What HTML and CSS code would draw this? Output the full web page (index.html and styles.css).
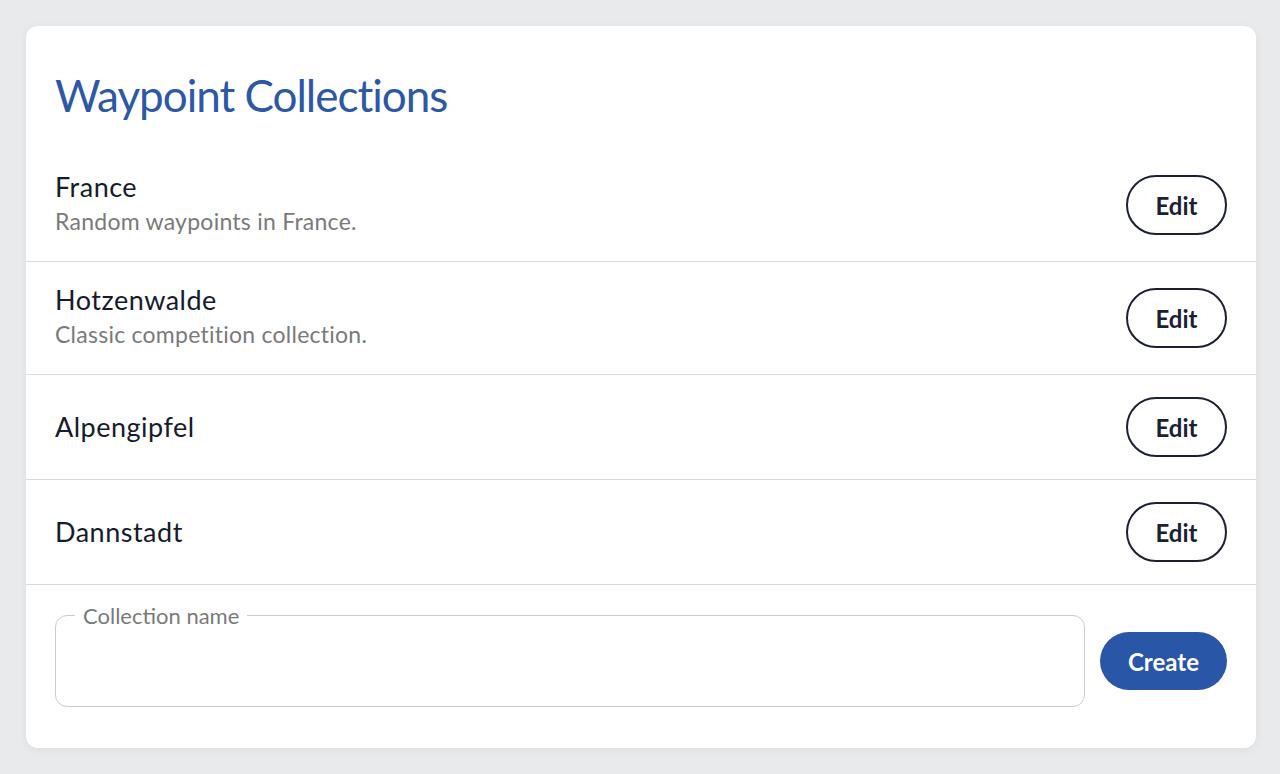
FILE: index.html
```html
<!DOCTYPE html>
<html lang="en">
<head>
<meta charset="utf-8">
<title>Waypoint Collections</title>
<link rel="stylesheet" href="styles.css">
</head>
<body>
<main class="card">
  <h1 class="title">Waypoint Collections</h1>
  <ul class="list">
    <li class="row">
      <div class="info">
        <div class="name">France</div>
        <div class="desc">Random waypoints in France.</div>
      </div>
      <button class="btn-edit">Edit</button>
    </li>
    <li class="row">
      <div class="info">
        <div class="name">Hotzenwalde</div>
        <div class="desc">Classic competition collection.</div>
      </div>
      <button class="btn-edit">Edit</button>
    </li>
    <li class="row">
      <div class="info">
        <div class="name">Alpengipfel</div>
      </div>
      <button class="btn-edit">Edit</button>
    </li>
    <li class="row">
      <div class="info">
        <div class="name">Dannstadt</div>
      </div>
      <button class="btn-edit">Edit</button>
    </li>
  </ul>
  <form class="create-form">
    <div class="field">
      <label class="field-label" for="cname">Collection name</label>
      <input class="field-input" id="cname" type="text">
    </div>
    <button type="button" class="btn-create">Create</button>
  </form>
</main>
</body>
</html>
```

FILE: styles.css
```css
* { box-sizing: border-box; }

html, body {
  margin: 0;
  padding: 0;
}

body {
  background: #e9eaec;
  font-family: Lato, "Open Sans", sans-serif;
  padding: 26px 24px 26px 26px;
  height: 774px;
  overflow: hidden;
}

.card {
  width: 1230px;
  height: 722px;
  background: #ffffff;
  border-radius: 12px;
  box-shadow: 0 2px 10px rgba(0, 0, 0, 0.06);
  padding-top: 43px;
}

.title {
  margin: 0 0 28px 0;
  padding: 0 29px;
  font-size: 44px;
  line-height: 52px;
  font-weight: 400;
  letter-spacing: -1px;
  color: #2c58a6;
}

.list {
  list-style: none;
  margin: 0;
  padding: 0;
}

.row {
  display: flex;
  align-items: center;
  justify-content: space-between;
  padding: 22px 29px;
  border-bottom: 1px solid #dadada;
}

.info {
  display: flex;
  flex-direction: column;
}

.name {
  font-size: 27px;
  line-height: 32px;
  letter-spacing: 0.5px;
  color: #161b2e;
}

.desc {
  font-size: 23px;
  line-height: 36px;
  letter-spacing: 0.25px;
  color: #7a7a7a;
}

.btn-edit {
  width: 101px;
  height: 60px;
  border: 2px solid #1b2033;
  border-radius: 30px;
  background: #ffffff;
  font-family: Lato, "Open Sans", sans-serif;
  font-weight: 700;
  font-size: 24px;
  color: #1b2033;
  padding: 0;
}

.create-form {
  display: flex;
  align-items: center;
  gap: 15px;
  padding: 30px 29px 0 29px;
}

.field {
  position: relative;
  flex: 1;
}

.field-input {
  display: block;
  width: 100%;
  height: 92px;
  border: 1.5px solid #cbcbcb;
  border-radius: 12px;
  background: #ffffff;
  font-family: Lato, "Open Sans", sans-serif;
  font-size: 22px;
  padding: 0 20px;
  outline: none;
}

.field-label {
  position: absolute;
  left: 20px;
  top: -12px;
  padding: 0 8px;
  background: #ffffff;
  font-size: 22px;
  line-height: 26px;
  color: #7a7a7a;
}

.btn-create {
  width: 127px;
  height: 58px;
  border: none;
  border-radius: 29px;
  background: #2a56a8;
  color: #ffffff;
  font-family: Lato, "Open Sans", sans-serif;
  font-weight: 700;
  font-size: 24px;
  padding: 0;
}
```
